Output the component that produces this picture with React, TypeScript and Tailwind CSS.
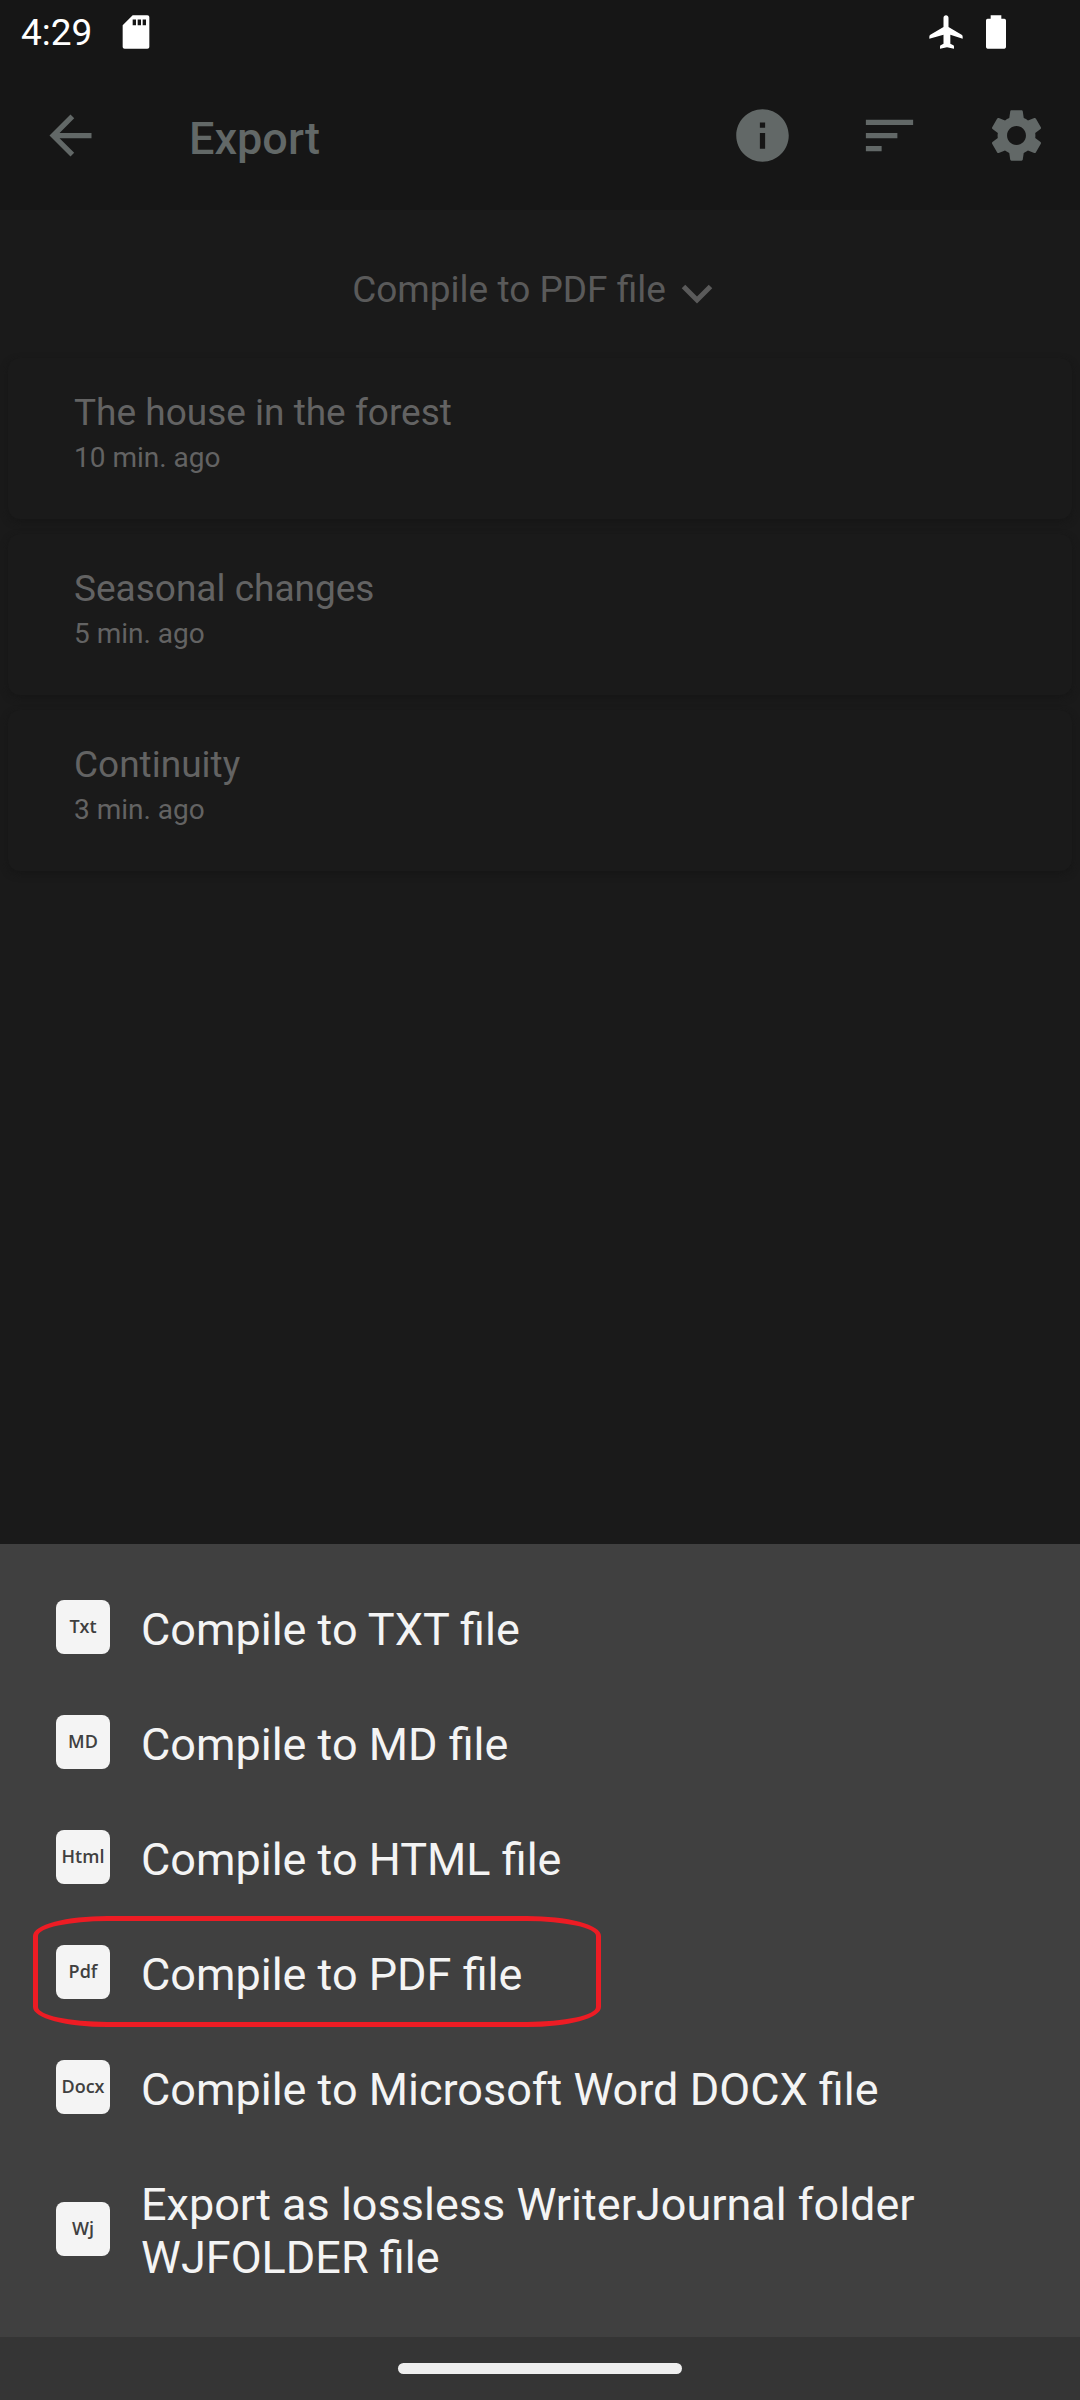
import type { ReactNode } from "react";

type Doc = { title: string; age: string };
type Format = { tag: string; label: string; highlighted?: boolean };

const docs: Doc[] = [
  { title: "The house in the forest", age: "10 min. ago" },
  { title: "Seasonal changes", age: "5 min. ago" },
  { title: "Continuity", age: "3 min. ago" },
];

const formats: Format[] = [
  { tag: "Txt", label: "Compile to TXT file" },
  { tag: "MD", label: "Compile to MD file" },
  { tag: "Html", label: "Compile to HTML file" },
  { tag: "Pdf", label: "Compile to PDF file", highlighted: true },
  { tag: "Docx", label: "Compile to Microsoft Word DOCX file" },
  { tag: "Wj", label: "Export as lossless WriterJournal folder WJFOLDER file" },
];

function Glyph({ className, children }: { className: string; children: ReactNode }) {
  return (
    <svg viewBox="0 0 24 24" fill="currentColor" aria-hidden="true" className={className}>
      {children}
    </svg>
  );
}

function StatusBar() {
  return (
    <div className="flex h-16 items-center pl-[21px] pr-16 text-white">
      <span className="pt-0.5 text-[37px] leading-[44px]">4:29</span>
      <Glyph className="ml-6 size-10">
        <path d="M18 2h-8L4 8v12.800c0 .7.500 1.200 1.200 1.200h13.600c.7 0 1.200-.5 1.200-1.200V3.200C20 2.500 19.500 2 18.800 2H18zm-6 6h-2V4.500h2V8zm3 0h-2V4.500h2V8zm3 0h-2V4.500h2V8z" />
      </Glyph>
      <Glyph className="ml-auto size-10">
        <path d="M22 16v-1.200c0-.5-.2-.8-.6-1.100L13.500 9V3.500c0-.83-.67-1.500-1.500-1.500s-1.500.67-1.500 1.500V9l-7.900 4.700c-.4.300-.6.600-.6 1.100V16l8.500-2.300V19l-1.700 1c-.3.200-.4.500-.4.800V22l4.200-.8 4.200.8v-1.200c0-.3-.1-.6-.4-.8l-1.800-1v-5.300L22 16z" />
      </Glyph>
      <Glyph className="ml-2.5 size-10">
        <path d="M17 4h-1.800V2H8.800v2H7c-.6 0-1 .5-1 1.100v15.800c0 .6.400 1.100 1 1.100h10c.6 0 1-.5 1-1.100V5.100C18 4.500 17.600 4 17 4z" />
      </Glyph>
    </div>
  );
}

function ToolButton({ label, children }: { label: string; children: ReactNode }) {
  return (
    <button type="button" aria-label={label} className="flex h-[143px] w-[127px] items-center justify-center">
      <Glyph className="size-[63px]">{children}</Glyph>
    </button>
  );
}

function Toolbar() {
  return (
    <div className="flex h-[146px] items-start pl-[7px] text-[#626867]">
      <ToolButton label="Back">
        <path d="M20 11H7.830l5.590-5.590L12 4l-8 8 8 8 1.410-1.410L7.830 13H20v-2z" />
      </ToolButton>
      <h1 className="ml-[55px] mt-12 flex-1 text-[45px] font-medium leading-[53px]">Export</h1>
      <ToolButton label="Information">
        <path d="M12 2C6.480 2 2 6.480 2 12s4.480 10 10 10 10-4.480 10-10S17.520 2 12 2zm1 15h-2v-6h2v6zm0-8h-2V7h2v2z" />
      </ToolButton>
      <ToolButton label="Sort">
        <path d="M3 18h6v-2H3v2zM3 6v2h18V6H3zm0 7h12v-2H3v2z" />
      </ToolButton>
      <ToolButton label="Settings">
        <path d="M19.140 12.940c.04-.3.06-.61.06-.94 0-.32-.02-.64-.07-.94l2.030-1.580c.18-.14.23-.41.12-.61l-1.920-3.320c-.12-.22-.37-.29-.59-.22l-2.390.96c-.5-.38-1.030-.7-1.620-.94l-.36-2.540c-.04-.24-.24-.41-.48-.41h-3.840c-.24 0-.43.17-.47.41l-.36 2.540c-.59.24-1.130.57-1.620.94l-2.390-.96c-.22-.08-.47 0-.59.22L2.740 8.870c-.12.21-.08.47.12.61l2.030 1.580c-.05.3-.09.63-.09.94s.02.64.07.94l-2.030 1.580c-.18.14-.23.41-.12.61l1.920 3.320c.12.22.37.29.59.22l2.390-.96c.5.38 1.030.7 1.620.94l.36 2.540c.05.24.24.41.48.41h3.840c.24 0 .44-.17.47-.41l.36-2.540c.59-.24 1.130-.56 1.620-.94l2.390.96c.22.08.47 0 .59-.22l1.920-3.320c.12-.22.07-.47-.12-.61l-2.010-1.580zM12 15.600c-1.980 0-3.600-1.620-3.600-3.600s1.620-3.600 3.600-3.600 3.600 1.620 3.600 3.600-1.620 3.600-3.600 3.600z" />
      </ToolButton>
    </div>
  );
}

function DocCard({ title, age }: Doc) {
  return (
    <li className="rounded-[12px] bg-[#1a1a1a] px-[66px] pb-[43px] pt-8 text-[#636363] shadow-[0_3px_7px_#161616]">
      <h2 className="text-[37px] leading-[46px]">{title}</h2>
      <p className="mt-1 text-[28px] leading-9">{age}</p>
    </li>
  );
}

function FormatRow({ tag, label, highlighted }: Format) {
  return (
    <button
      type="button"
      className="relative flex w-full items-center gap-[31px] px-14 py-[31px] text-left text-[45px] leading-[53px] text-[#f4f4f4]"
    >
      <span
        aria-hidden="true"
        className="-mt-[3px] mb-0.5 flex size-[54px] shrink-0 items-center justify-center rounded-lg bg-[#f4f4f4] pb-0.5 font-['Open_Sans',sans-serif] text-lg font-semibold leading-6 text-[#404040]"
      >
        {tag}
      </span>
      <span>{label}</span>
      {highlighted && (
        <span
          aria-hidden="true"
          className="absolute -top-px left-[33px] h-[111px] w-[568px] rounded-[74px/20px] border-[5px] border-[#ed1c24]"
        />
      )}
    </button>
  );
}

export default function App() {
  return (
    <div className="flex min-h-screen flex-col bg-[#1a1a1a] font-[Roboto,sans-serif]">
      <header className="bg-[#161616]">
        <StatusBar />
        <Toolbar />
      </header>

      <main className="flex-1">
        <div className="flex h-[148px] items-center justify-center">
          <button type="button" className="mt-3 flex items-center gap-[15px] pr-[15px] text-[37px] leading-[44px] text-[#5a5a5a]">
            Compile to PDF file
            <svg viewBox="0 0 32 20" fill="none" aria-hidden="true" className="mt-2 h-5 w-8">
              <path d="M2.500 2.500 16 16 29.500 2.500" stroke="currentColor" strokeWidth="5" />
            </svg>
          </button>
        </div>
        <ul className="flex flex-col gap-[15px] px-2">
          {docs.map((doc) => (
            <DocCard key={doc.title} {...doc} />
          ))}
        </ul>
      </main>

      <section aria-label="Export format" className="bg-[#404040] pb-[22px] pt-7">
        {formats.map((format) => (
          <FormatRow key={format.tag} {...format} />
        ))}
      </section>

      <footer className="flex h-[63px] items-center justify-center bg-[#353535]">
        <span className="h-[11px] w-[284px] rounded-full bg-[#eeeeee]" />
      </footer>
    </div>
  );
}
